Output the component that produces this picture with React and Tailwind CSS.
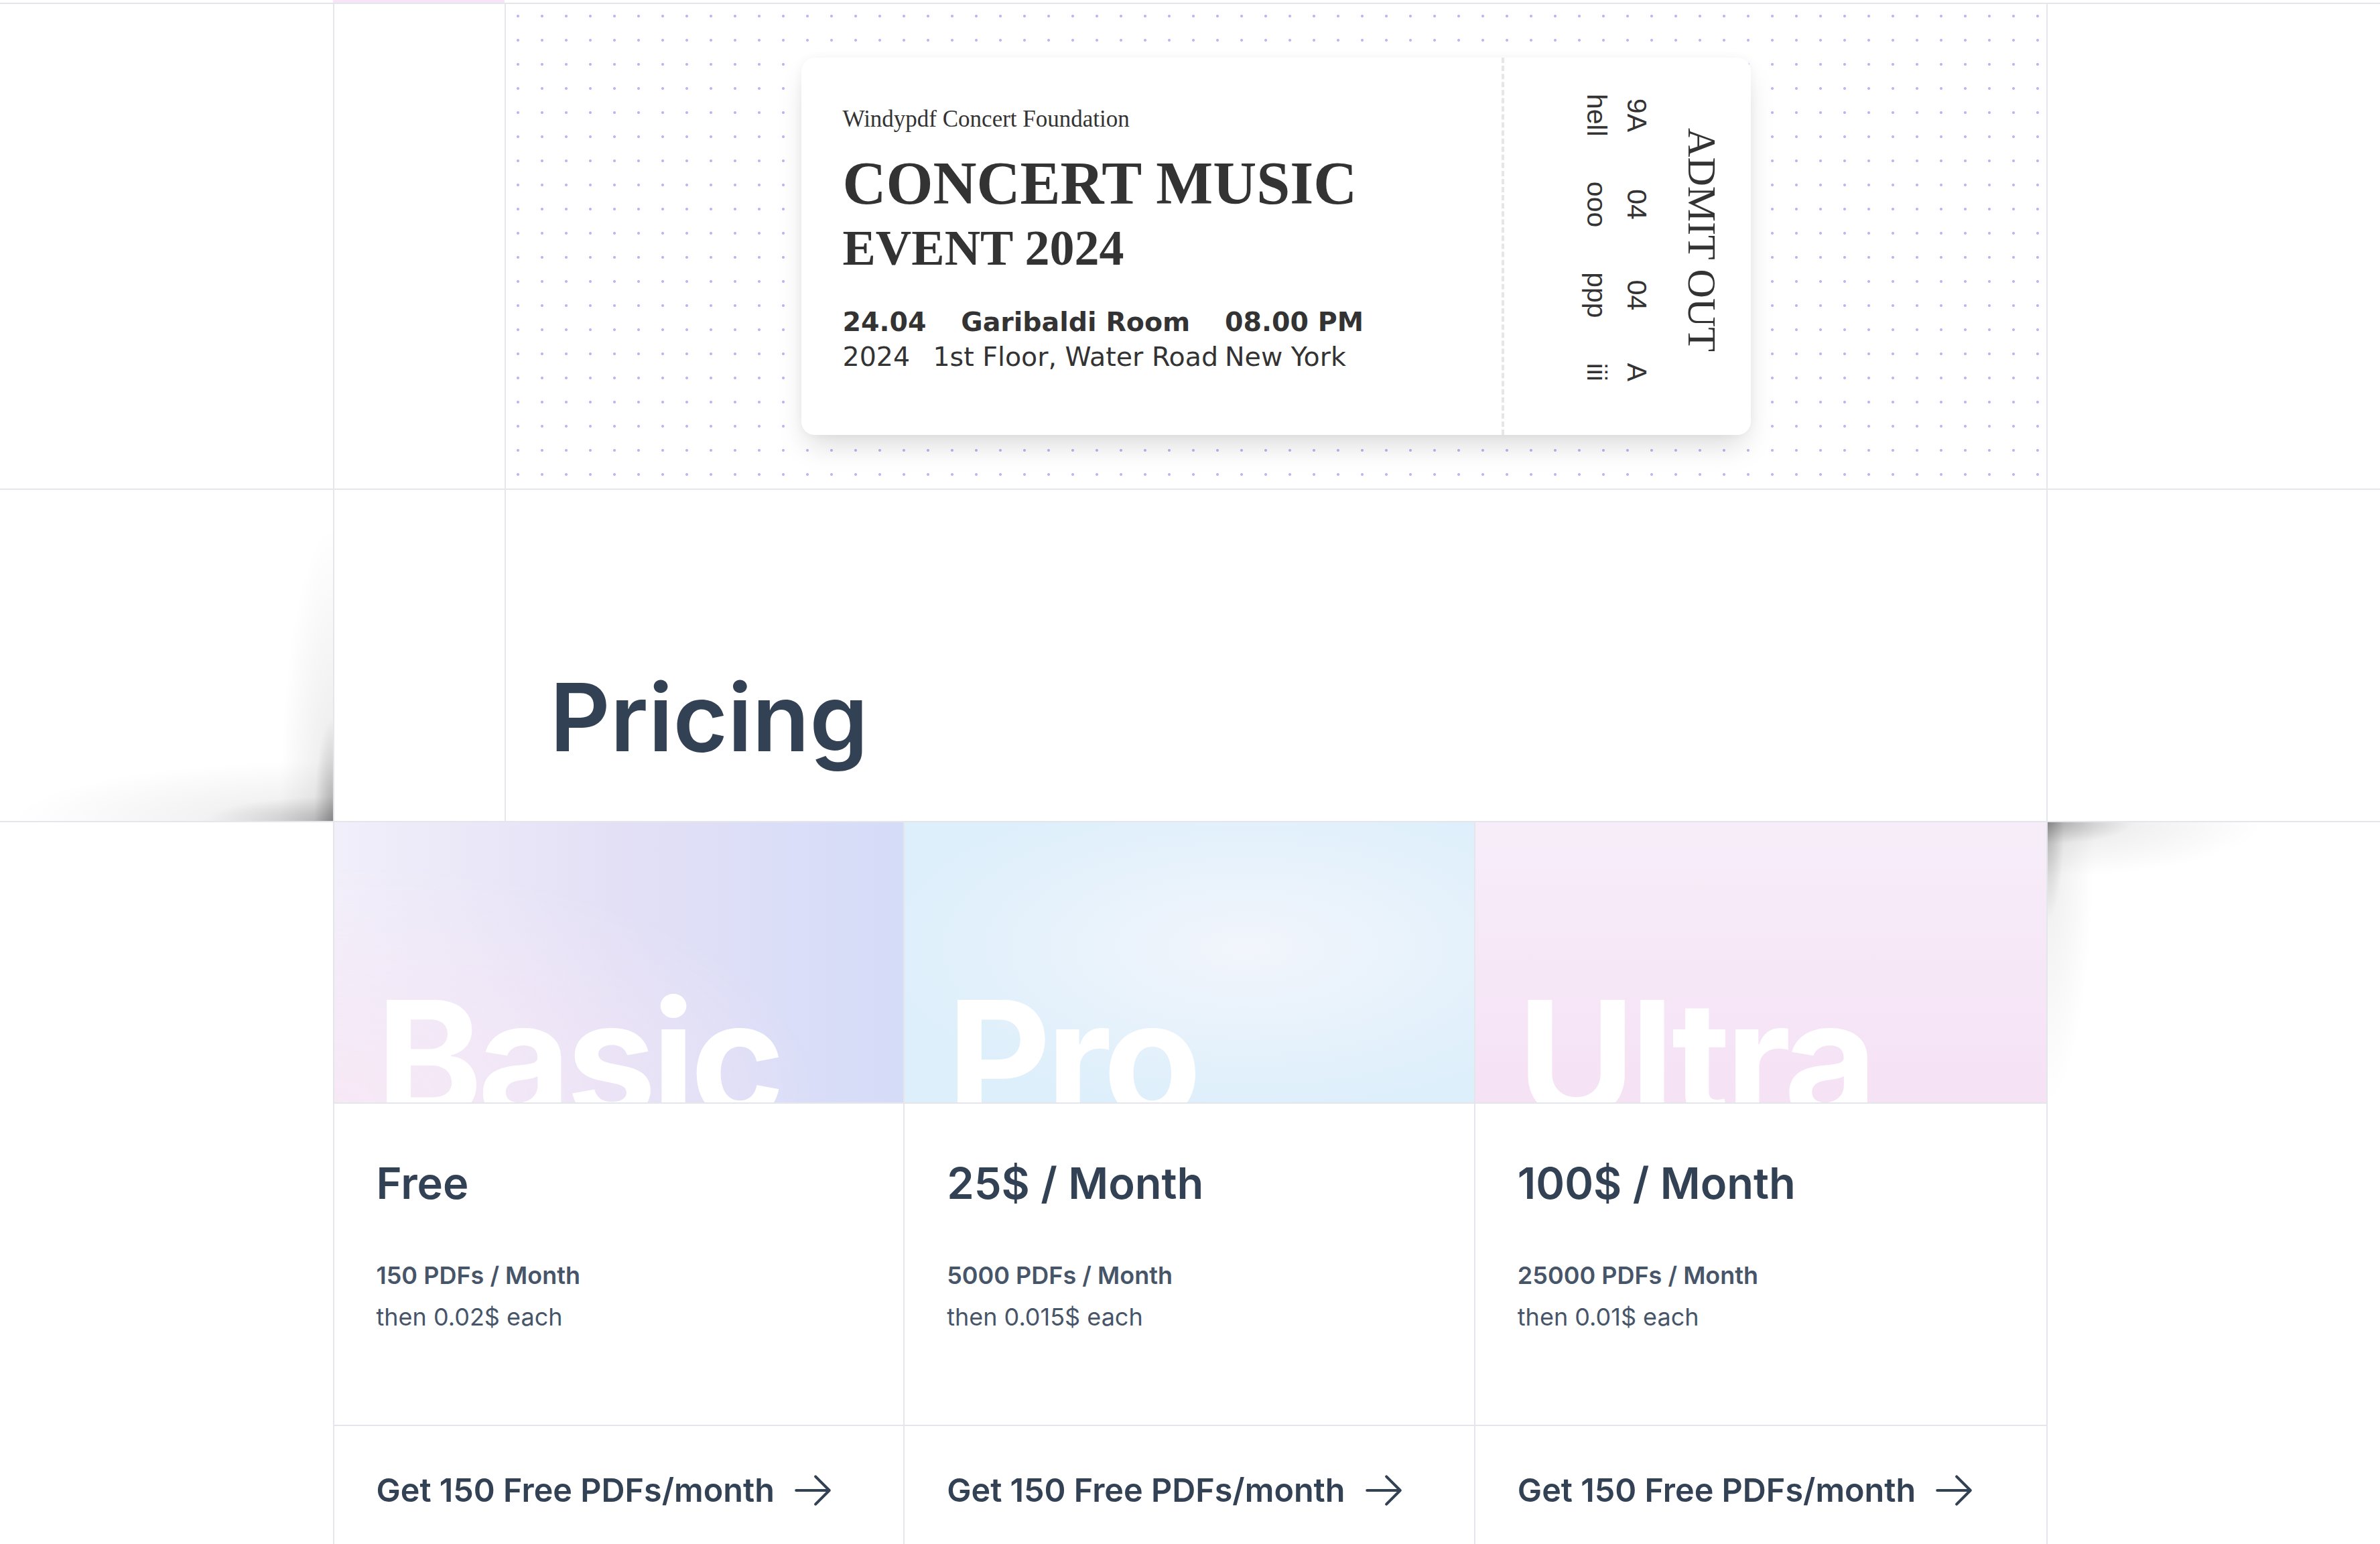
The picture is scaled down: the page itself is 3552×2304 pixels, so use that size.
import React from 'react';

const plans = [
  {
    name: 'Basic',
    price: 'Free',
    quota: '150 PDFs / Month',
    extra: 'then 0.02$ each',
    bg: 'bg-[radial-gradient(ellipse_at_0%_100%,#f7e8f6,transparent_60%),linear-gradient(90deg,#f1effa,#e3e0f6_50%,#d5dcf8)]',
  },
  {
    name: 'Pro',
    price: '25$ / Month',
    quota: '5000 PDFs / Month',
    extra: 'then 0.015$ each',
    bg: 'bg-[radial-gradient(ellipse_at_60%_45%,#f2f5fc,#ddeffb_75%)]',
  },
  {
    name: 'Ultra',
    price: '100$ / Month',
    quota: '25000 PDFs / Month',
    extra: 'then 0.01$ each',
    bg: 'bg-[linear-gradient(180deg,#f7edf9,#f5e2f5)]',
  },
];

const ArrowRight = () => (
  <svg
    viewBox="0 0 24 24"
    fill="none"
    stroke="currentColor"
    strokeWidth={1.5}
    strokeLinecap="round"
    strokeLinejoin="round"
    className="w-[66px] h-[66px] shrink-0"
  >
    <path d="M13.5 4.5 21 12m0 0-7.5 7.5M21 12H3" />
  </svg>
);

const Ticket = () => (
  <div className="flex w-[1417px] h-[563px] bg-white rounded-[20px] shadow-[0_22px_44px_-8px_rgba(0,0,0,0.15),0_0_14px_rgba(0,0,0,0.04)] text-[#333]">
    <div className="w-[1045px] shrink-0 pl-[62px] pt-[72px]">
      <div className="font-['Liberation_Serif',serif] text-[35px] leading-[40px]">Windypdf Concert Foundation</div>
      <div className="mt-[31px] font-['Liberation_Serif',serif] font-bold text-[90px] leading-[90px] whitespace-nowrap">CONCERT MUSIC</div>
      <div className="mt-[14px] font-['Liberation_Serif',serif] font-bold text-[74px] leading-[74px]">EVENT 2024</div>
      <table className="mt-[47px] -ml-[5px] font-['DejaVu_Sans',sans-serif] text-[39.5px] leading-[52px]">
        <thead>
          <tr>
            <th className="px-[5px] font-bold text-center whitespace-nowrap">24.04</th>
            <th className="px-[5px] font-bold text-center whitespace-nowrap">Garibaldi Room</th>
            <th className="px-[5px] font-bold text-center whitespace-nowrap">08.00 PM</th>
          </tr>
        </thead>
        <tbody>
          <tr>
            <td className="px-[5px] text-left whitespace-nowrap">2024</td>
            <td className="px-[5px] text-left whitespace-nowrap">1st Floor, Water Road</td>
            <td className="px-[5px] text-left whitespace-nowrap">New York</td>
          </tr>
        </tbody>
      </table>
    </div>
    <div className="w-[372px] shrink-0 border-l-4 border-dashed border-[#e6e6e6] flex items-center justify-center">
      <div className="w-[563px] h-[368px] shrink-0 rotate-90 pt-[43px] pl-[20px]">
        <div className="w-[503px]">
          <div className="text-center font-['Liberation_Serif',serif] text-[60px] leading-[60px]">ADMIT OUT</div>
          <table className="mt-[37px] font-['Liberation_Sans',Arial,sans-serif] text-[41px] leading-[60px]">
            <tbody>
              <tr>
                <td className="px-[33.5px] text-center">9A</td>
                <td className="px-[33.5px] text-center">04</td>
                <td className="px-[33.5px] text-center">04</td>
                <td className="px-[33.5px] text-center">A</td>
              </tr>
              <tr>
                <td className="px-[33.5px] text-center">hell</td>
                <td className="px-[33.5px] text-center">ooo</td>
                <td className="px-[33.5px] text-center">ppp</td>
                <td className="px-[33.5px] text-center">iii</td>
              </tr>
            </tbody>
          </table>
        </div>
      </div>
    </div>
  </div>
);

const PlanCard = ({ plan }) => (
  <div className="flex flex-col border-[#e5e6eb]">
    <div className={`h-[420px] overflow-hidden flex flex-col justify-end px-[63px] border-b-2 border-[#e5e6eb] ${plan.bg}`}>
      <div className="font-['Inter',sans-serif] font-bold text-[240px] leading-none tracking-[-0.03em] text-white -mb-[55px]">
        {plan.name}
      </div>
    </div>
    <div className="h-[481px] border-b-2 border-[#e5e6eb] px-[63px] pt-[86px] font-['Inter',sans-serif]">
      <div className="text-[65px] leading-[65px] font-semibold text-[#334155]">{plan.price}</div>
      <div className="mt-[74px] text-[36px] leading-[62px] font-semibold text-[#475569]">{plan.quota}</div>
      <div className="text-[36px] leading-[62px] text-[#475569]">{plan.extra}</div>
    </div>
    <div className="h-[176px] px-[63px] pt-[63px] font-['Inter',sans-serif]">
      <div className="flex items-center gap-[24px] text-[#334155]">
        <span className="text-[48.5px] leading-[66px] font-semibold whitespace-nowrap">Get 150 Free PDFs/month</span>
        <ArrowRight />
      </div>
    </div>
  </div>
);

export default function App() {
  return (
    <div className="w-full h-[2304px] overflow-hidden bg-white flex flex-col">
      {/* strip left over from the section above */}
      <div className="flex h-[6px] shrink-0 border-b-2 border-[#e5e6eb]">
        <div className="flex-1" />
        <div className="w-[2559px] flex">
          <div className="w-[256px] h-full bg-[#f7e4f6]" />
        </div>
        <div className="flex-1" />
      </div>

      {/* ticket preview */}
      <div className="flex h-[725px] shrink-0 border-b-2 border-[#e5e6eb]">
        <div className="flex-1" />
        <div className="w-[2559px] flex border-x-2 border-[#e5e6eb]">
          <div className="w-[256px] border-r-2 border-[#e5e6eb]" />
          <div className="flex-1 flex items-center justify-center bg-[radial-gradient(circle,#bcb8f6_1.8px,transparent_2.3px)] bg-[length:36px_36px]">
            <Ticket />
          </div>
        </div>
        <div className="flex-1" />
      </div>

      {/* pricing title */}
      <div className="flex h-[496px] shrink-0 border-b-2 border-[#e5e6eb]">
        <div className="flex-1 bg-[radial-gradient(80px_440px_at_100%_100%,rgba(0,0,0,0.3),rgba(0,0,0,0.06)_35%,transparent),radial-gradient(480px_90px_at_100%_100%,rgba(0,0,0,0.26),rgba(0,0,0,0.05)_40%,transparent)]" />
        <div className="w-[2559px] flex border-x-2 border-[#e5e6eb]">
          <div className="w-[256px] border-r-2 border-[#e5e6eb]" />
          <div className="flex-1 flex flex-col justify-end pl-[66px] pb-[85px]">
            <h2 className="font-['Inter',sans-serif] text-[140px] leading-none font-semibold text-[#334155]">Pricing</h2>
          </div>
        </div>
        <div className="flex-1" />
      </div>

      {/* plans */}
      <div className="flex flex-1">
        <div className="flex-1" />
        <div className="w-[2559px] grid grid-cols-3 divide-x-2 divide-[#e5e6eb] border-x-2 border-[#e5e6eb]">
          {plans.map((plan) => (
            <PlanCard key={plan.name} plan={plan} />
          ))}
        </div>
        <div className="flex-1 bg-[radial-gradient(320px_80px_at_0%_0%,rgba(0,0,0,0.3),rgba(0,0,0,0.06)_40%,transparent),radial-gradient(70px_420px_at_0%_0%,rgba(0,0,0,0.26),rgba(0,0,0,0.05)_35%,transparent)]" />
      </div>
    </div>
  );
}
